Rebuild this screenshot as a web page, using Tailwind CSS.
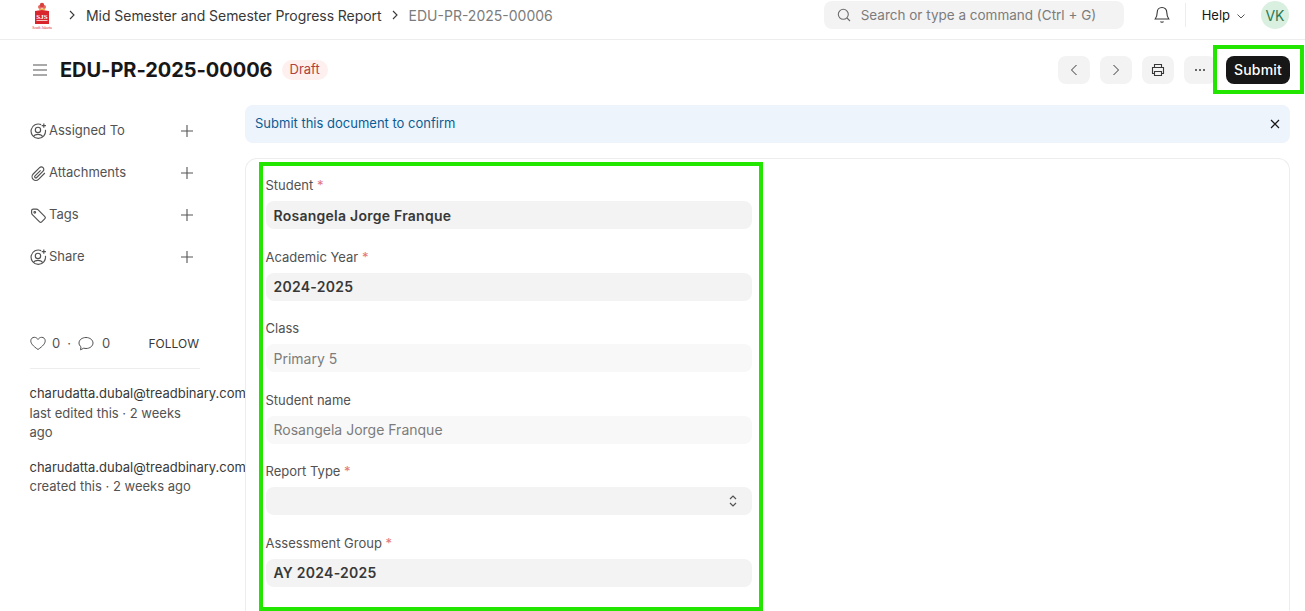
<!DOCTYPE html>
<html lang="en">
<head>
    <meta charset="UTF-8">
    <title>EDU-PR-2025-00006</title>
    <script src="https://cdn.jsdelivr.net/npm/@tailwindcss/browser@4"></script>
</head>
<body class="bg-white font-['Inter',sans-serif] text-[#383838] h-[611px] overflow-hidden relative">

    <!-- Navbar -->
    <nav class="h-10 border-b border-[#ededed] flex items-center pl-[31px] pr-4 pt-px pb-[10px]">
        <svg class="w-[22px] h-[28px]" viewBox="0 0 22 28">
            <circle cx="9" cy="6" r="2" fill="#e8665f"/>
            <circle cx="13" cy="6" r="2" fill="#e8665f"/>
            <circle cx="11" cy="4" r="2.200" fill="#d8403c"/>
            <path d="M8 8.500h6" stroke="#e9b44c" stroke-width="1.500"/>
            <path d="M4 10 L11 9 L18 10 L18 23 L4 23 Z" fill="#d8262c"/>
            <path d="M5.500 19.500h11" stroke="#f6c9c7" stroke-width="1"/>
            <text x="11" y="18" text-anchor="middle" font-size="7" font-weight="700" fill="#fff" font-family="Liberation Serif, serif">SJS</text>
            <text x="11" y="27.500" text-anchor="middle" font-size="3.600" fill="#d8262c" font-family="Liberation Serif, serif">South Jakarta</text>
        </svg>
        <svg class="w-2 h-2.5 ml-[15px]" viewBox="0 0 8 10" fill="none" stroke="#383838" stroke-width="1.100"><path d="M2 1l4 4-4 4"/></svg>
        <span class="text-[14px] ml-[10px] tracking-[-0.05px] text-[#383838]">Mid Semester and Semester Progress Report</span>
        <svg class="w-2 h-2.5 ml-[9px]" viewBox="0 0 8 10" fill="none" stroke="#383838" stroke-width="1.100"><path d="M2 1l4 4-4 4"/></svg>
        <span class="text-[14px] ml-[10px] text-[#7c7c7c]">EDU-PR-2025-00006</span>

        <div class="ml-auto flex items-center">
            <div class="w-[300px] h-7 bg-[#f3f3f3] rounded-lg flex items-center pl-[13px] text-[13.500px] text-[#7c7c7c]">
                <svg class="w-[14px] h-[14px] mr-[10px]" viewBox="0 0 14 14" fill="none" stroke="#6b6b6b" stroke-width="1.100"><circle cx="6.300" cy="6.300" r="5"/><path d="M10 10l3 3"/></svg>
                Search or type a command (Ctrl + G)
            </div>
            <svg class="w-[16px] h-[18px] ml-[30px]" viewBox="0 0 16 18" fill="none" stroke="#383838" stroke-width="1.100"><path d="M8 1.500c-3 0-4.800 2.200-4.800 5 0 3.500-1 5-2 6.500h13.600c-1-1.500-2-3-2-6.500 0-2.800-1.800-5-4.800-5z"/><path d="M6.500 15.500c.5 1 2.500 1 3 0"/></svg>
            <div class="w-px h-6 bg-[#ededed] ml-[15px]"></div>
            <span class="text-[13px] text-[#171717] ml-4 pt-px">Help</span>
            <svg class="w-2.5 h-2.5 ml-[6px] mt-px" viewBox="0 0 10 10" fill="none" stroke="#555" stroke-width="1"><path d="M1.500 3.500L5 7l3.500-3.500"/></svg>
            <div class="w-7 h-7 rounded-full bg-[#d9efe0] text-[#2a7a55] text-[14px] flex items-center justify-center ml-[15px]">VK</div>
        </div>
    </nav>

    <!-- Title row -->
    <header class="h-[60px] flex items-center pl-[32px] pr-[15px]">
        <svg class="w-4 h-4" viewBox="0 0 16 16" stroke="#555" stroke-width="1.200"><path d="M1 3h14M1 8h14M1 13h14"/></svg>
        <h1 class="text-[20px] leading-none font-bold text-[#171717] ml-[12px] tracking-[-0.05px]">EDU-PR-2025-00006</h1>
        <span class="ml-[9px] h-5 px-2 rounded-full bg-[#fdf0ef] text-[#b0413e] text-[13px] flex items-center">Draft</span>

        <div class="ml-auto flex items-center gap-[10px]">
            <button class="w-8 h-7 rounded-lg bg-[#f3f3f3] flex items-center justify-center">
                <svg class="w-3 h-3.5" viewBox="0 0 12 14" fill="none" stroke="#383838" stroke-width="1"><path d="M8.500 2L3.500 7l5 5"/></svg>
            </button>
            <button class="w-8 h-7 rounded-lg bg-[#f3f3f3] flex items-center justify-center">
                <svg class="w-3 h-3.5" viewBox="0 0 12 14" fill="none" stroke="#383838" stroke-width="1"><path d="M3.500 2l5 5-5 5"/></svg>
            </button>
            <button class="w-8 h-7 rounded-lg bg-[#f3f3f3] flex items-center justify-center">
                <svg class="w-[14px] h-[14px]" viewBox="0 0 14 14" fill="none" stroke="#383838" stroke-width="1.100"><path d="M3.500 4.500V1.500h7v3M3.500 10.500H1.500V4.500h11v6h-2"/><path d="M3.500 8.500h7v4h-7z"/></svg>
            </button>
            <button class="w-8 h-7 rounded-lg bg-[#f3f3f3] flex items-center justify-center">
                <svg class="w-3 h-1" viewBox="0 0 12 4" fill="#383838"><circle cx="2" cy="2" r="1"/><circle cx="6" cy="2" r="1"/><circle cx="10" cy="2" r="1"/></svg>
            </button>
            <button class="w-16 h-7 rounded-lg bg-[#171717] text-white text-[14px] tracking-[0.2px] font-medium pb-px">Submit</button>
        </div>
    </header>

    <div class="flex pl-[30px] pr-[15px] pt-[5px]">

        <!-- Sidebar -->
        <aside class="w-[215px] shrink-0 text-[13px]">
            <div class="w-[170px] pt-[17px] flex flex-col gap-6 text-[#525252]">
                <div class="h-[18px] flex items-center">
                    <svg class="w-[17px] h-[17px]" viewBox="0 0 16 16" fill="none" stroke="#525252" stroke-width="1.100"><path d="M10.500 1.500A6.800 6.800 0 1 0 14.500 6.500"/><circle cx="7.500" cy="6.500" r="2.500"/><path d="M3.200 12.800c1.200-2.800 7.400-2.800 8.600 0"/><path d="M13 .5v4M11 2.500h4"/></svg>
                    <span class="ml-[2px]">Assigned To</span>
                    <svg class="w-3 h-3 ml-auto mr-[7px] mb-px" viewBox="0 0 12 12" stroke="#555" stroke-width="1.100"><path d="M6 0v12M0 6h12"/></svg>
                </div>
                <div class="h-[18px] flex items-center">
                    <svg class="w-[17px] h-[17px]" viewBox="0 0 16 16" fill="none" stroke="#525252" stroke-width="1.100"><path d="M14 7.500L8 13.500a3.500 3.500 0 0 1-5-5L9 2.500a2.300 2.300 0 0 1 3.300 3.300L6.300 11.800a1.100 1.100 0 0 1-1.600-1.600L10 5"/></svg>
                    <span class="ml-[2px]">Attachments</span>
                    <svg class="w-3 h-3 ml-auto mr-[7px] mb-px" viewBox="0 0 12 12" stroke="#555" stroke-width="1.100"><path d="M6 0v12M0 6h12"/></svg>
                </div>
                <div class="h-[18px] flex items-center">
                    <svg class="w-[17px] h-[17px]" viewBox="0 0 16 16" fill="none" stroke="#525252" stroke-width="1.100"><path d="M1.500 3.500q0-1.500 1.500-1.500h3q1 0 1.700.7l6.300 6.300q1 1 0 2l-3 3q-1 1-2 0L2.200 7.200q-.7-.7-.7-1.700z"/><circle cx="4.500" cy="5" r=".8"/></svg>
                    <span class="ml-[2px]">Tags</span>
                    <svg class="w-3 h-3 ml-auto mr-[7px] mb-px" viewBox="0 0 12 12" stroke="#555" stroke-width="1.100"><path d="M6 0v12M0 6h12"/></svg>
                </div>
                <div class="h-[18px] flex items-center">
                    <svg class="w-[17px] h-[17px]" viewBox="0 0 16 16" fill="none" stroke="#525252" stroke-width="1.100"><path d="M10.500 1.500A6.800 6.800 0 1 0 14.500 6.500"/><circle cx="7.500" cy="6.500" r="2.500"/><path d="M3.200 12.800c1.200-2.800 7.400-2.800 8.600 0"/><path d="M13 .5v4M11 2.500h4"/></svg>
                    <span class="ml-[2px]">Share</span>
                    <svg class="w-3 h-3 ml-auto mr-[7px] mb-px" viewBox="0 0 12 12" stroke="#555" stroke-width="1.100"><path d="M6 0v12M0 6h12"/></svg>
                </div>
            </div>

            <div class="w-[170px] mt-[68px] pb-[14px] border-b border-[#ededed] flex items-center text-[#525252]">
                <svg class="w-[16px] h-[15px]" viewBox="0 0 16 15" fill="none" stroke="#525252" stroke-width="1"><path d="M8 13.500C3 10 .8 7.500.8 4.800.8 2.700 2.400 1.300 4.300 1.300c1.500 0 2.900.8 3.700 2.200.8-1.400 2.200-2.200 3.700-2.200 1.900 0 3.500 1.400 3.500 3.500 0 2.700-2.200 5.200-7.200 8.700z"/></svg>
                <span class="ml-[6px]">0</span>
                <span class="ml-[7px]">·</span>
                <svg class="w-[16px] h-[15px] ml-[7px]" viewBox="0 0 16 15" fill="none" stroke="#525252" stroke-width="1"><path d="M8 1.500c-3.800 0-7 2.300-7 5.500 0 1.500.7 2.800 2 3.800l-.5 3 3.200-1.600c.7.200 1.500.3 2.300.3 3.800 0 7-2.400 7-5.500S11.800 1.500 8 1.500z"/></svg>
                <span class="ml-[8px]">0</span>
                <span class="ml-auto mr-px text-[12px] text-[#383838]">FOLLOW</span>
            </div>

            <div class="mt-[15.500px] ml-[-0.500px] leading-[19.500px] text-[#525252]">
                <p class="w-[155px]"><span class="text-[#383838]">charudatta.dubal@treadbinary.com</span> last edited this · 2 weeks ago</p>
                <p class="w-[170px] mt-[15px]"><span class="text-[#383838]">charudatta.dubal@treadbinary.com</span><br>created this · 2 weeks ago</p>
            </div>
        </aside>

        <!-- Main -->
        <main class="flex-1 min-w-0">
            <div class="h-[38px] rounded-lg bg-[#edf4fb] flex items-center justify-between pl-[10px] pr-[10px] text-[13px] text-[#0b5c95]">
                <span>Submit this document to confirm</span>
                <svg class="w-2.5 h-2.5" viewBox="0 0 10 10" stroke="#171717" stroke-width="1.200"><path d="M1 1l8 8M9 1l-8 8"/></svg>
            </div>

            <form class="mt-[15px] h-[453px] border border-b-0 border-[#ededed] rounded-t-xl pl-[19.500px] pt-[18px]">
                <div class="w-[486.500px] flex flex-col gap-[19.600px] text-[13px]">
                    <div>
                        <label class="block h-[17px] leading-[17px] text-[#525252] mb-[7px]">Student <span class="text-[#e2747c]">*</span></label>
                        <div class="h-7 rounded-lg bg-[#f3f3f3] px-2 flex items-center text-[14px] font-semibold tracking-[0.25px] text-[#383838]">Rosangela Jorge Franque</div>
                    </div>
                    <div>
                        <label class="block h-[17px] leading-[17px] text-[#525252] mb-[7px]">Academic Year <span class="text-[#e2747c]">*</span></label>
                        <div class="h-7 rounded-lg bg-[#f3f3f3] px-2 flex items-center text-[14px] font-semibold tracking-[0.25px] text-[#383838]">2024-2025</div>
                    </div>
                    <div>
                        <label class="block h-[17px] leading-[17px] text-[#525252] mb-[7px]">Class</label>
                        <div class="h-7 rounded-lg bg-[#f8f8f8] px-2 flex items-center text-[14px] text-[#7c7c7c]">Primary 5</div>
                    </div>
                    <div>
                        <label class="block h-[17px] leading-[17px] text-[#525252] mb-[7px]">Student name</label>
                        <div class="h-7 rounded-lg bg-[#f8f8f8] px-2 flex items-center text-[14px] text-[#7c7c7c]">Rosangela Jorge Franque</div>
                    </div>
                    <div>
                        <label class="block h-[17px] leading-[17px] text-[#525252] mb-[7px]">Report Type <span class="text-[#e2747c]">*</span></label>
                        <div class="h-7 rounded-lg bg-[#f3f3f3] px-2 flex items-center justify-end pr-[15px]">
                            <svg class="w-2 h-3" viewBox="0 0 8 12" fill="none" stroke="#525252" stroke-width="1.200"><path d="M1 4l3-3 3 3M1 8l3 3 3-3"/></svg>
                        </div>
                    </div>
                    <div>
                        <label class="block h-[17px] leading-[17px] text-[#525252] mb-[7px]">Assessment Group <span class="text-[#e2747c]">*</span></label>
                        <div class="h-7 rounded-lg bg-[#f3f3f3] px-2 flex items-center text-[14px] font-semibold tracking-[0.25px] text-[#383838]">AY 2024-2025</div>
                    </div>
                </div>
            </form>
        </main>
    </div>

    <!-- Green annotation boxes drawn over the screenshot -->
    <div class="absolute left-[259px] top-[162px] w-[504px] h-[449px] border-[4px] border-[#22e600] pointer-events-none"></div>
    <div class="absolute left-[1213px] top-[45px] w-[91px] h-[49px] border-[4px] border-[#22e600] pointer-events-none"></div>
</body>
</html>
